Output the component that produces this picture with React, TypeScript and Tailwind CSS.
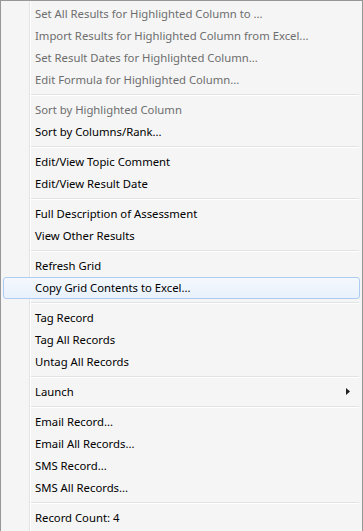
type Item =
  | { kind: "item"; label: string; disabled?: boolean; hover?: boolean; submenu?: boolean }
  | { kind: "sep" };

const ITEMS: Item[] = [
  { kind: "item", label: "Set All Results for Highlighted Column to ...", disabled: true },
  { kind: "item", label: "Import Results for Highlighted Column from Excel...", disabled: true },
  { kind: "item", label: "Set Result Dates for Highlighted Column...", disabled: true },
  { kind: "item", label: "Edit Formula for Highlighted Column...", disabled: true },
  { kind: "sep" },
  { kind: "item", label: "Sort by Highlighted Column", disabled: true },
  { kind: "item", label: "Sort by Columns/Rank..." },
  { kind: "sep" },
  { kind: "item", label: "Edit/View Topic Comment" },
  { kind: "item", label: "Edit/View Result Date" },
  { kind: "sep" },
  { kind: "item", label: "Full Description of Assessment" },
  { kind: "item", label: "View Other Results" },
  { kind: "sep" },
  { kind: "item", label: "Refresh Grid" },
  { kind: "item", label: "Copy Grid Contents to Excel...", hover: true },
  { kind: "sep" },
  { kind: "item", label: "Tag Record" },
  { kind: "item", label: "Tag All Records" },
  { kind: "item", label: "Untag All Records" },
  { kind: "sep" },
  { kind: "item", label: "Launch", submenu: true },
  { kind: "sep" },
  { kind: "item", label: "Email Record..." },
  { kind: "item", label: "Email All Records..." },
  { kind: "item", label: "SMS Record..." },
  { kind: "item", label: "SMS All Records..." },
  { kind: "sep" },
  { kind: "item", label: "Record Count: 4" },
];

function MenuRow({ item }: { item: Item }) {
  if (item.kind === "sep") {
    return (
      <div className="h-[8px] flex flex-col justify-center pl-[30px] pr-[3px]">
        <div className="h-px bg-[#e2e3e3]" />
        <div className="h-px bg-white" />
      </div>
    );
  }
  return (
    <div className="h-[22px] px-[2px]">
      <div
        className={
          "relative h-[22px] flex items-center pl-[31px] rounded-[3px] border " +
          (item.hover
            ? "border-[#aeccf1] bg-gradient-to-b from-[#f4f8fd] to-[#e8f1fc]"
            : "border-transparent")
        }
      >
        <span className={item.disabled ? "text-[#6d6d6d]" : "text-[#000000]"}>{item.label}</span>
        {item.submenu && (
          <svg
            className="absolute right-[9px] top-[6px]"
            width="4"
            height="7"
            viewBox="0 0 4 7"
          >
            <path d="M0 0 L4 3.5 L0 7 Z" fill="#202020" />
          </svg>
        )}
      </div>
    </div>
  );
}

export default function App() {
  return (
    <div
      className="w-[363px] h-[531px] bg-white overflow-hidden"
      style={{ fontFamily: '"Noto Sans", "Open Sans", sans-serif' }}
    >
      <div className="relative w-[363px] h-[540px] bg-[#f5f5f5] border border-[#979797] pt-[2px] text-[11.3px] leading-[22px]">
        <div className="absolute left-[28px] top-0 bottom-0 w-px bg-[#e2e3e3]" />
        <div className="absolute left-[29px] top-0 bottom-0 w-px bg-white" />
        <div className="relative flex flex-col">
          {ITEMS.map((it, i) => (
            <MenuRow key={i} item={it} />
          ))}
        </div>
      </div>
    </div>
  );
}
